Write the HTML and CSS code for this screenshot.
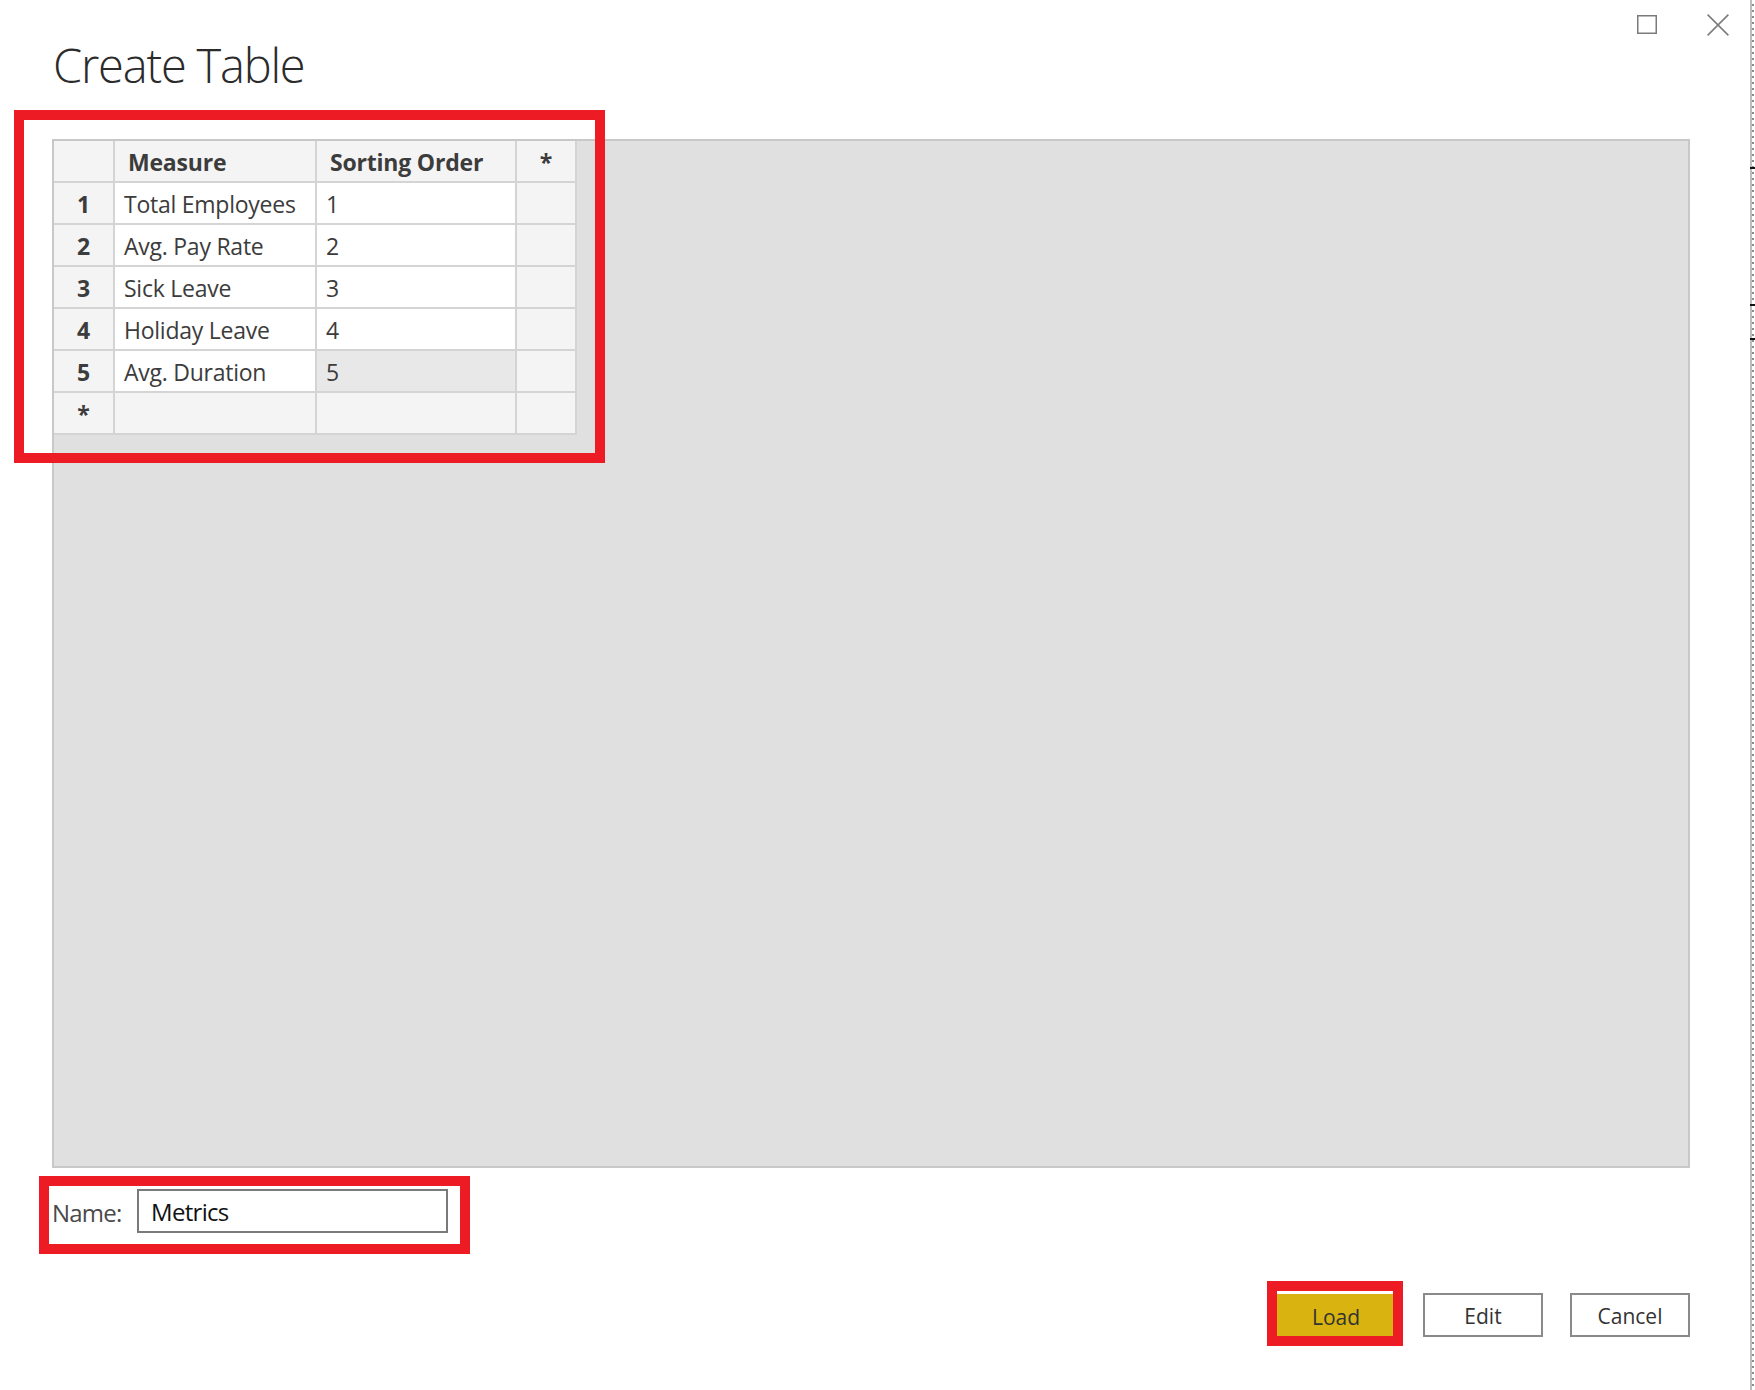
FILE: index.html
```html
<!DOCTYPE html>
<html lang="en">
<head>
<meta charset="utf-8">
<title>Create Table</title>
<link rel="stylesheet" href="styles.css">
</head>
<body>
<div class="screen">
  <div class="window">
    <header class="titlebar">
      <h1 class="title">Create Table</h1>
      <div class="controls">
        <svg class="ctl" width="22" height="22" viewBox="0 0 22 22" aria-label="Maximize"><rect x="1.75" y="1.75" width="18.5" height="17.5" fill="none" stroke="#7b7b7b" stroke-width="1.5"/></svg>
        <svg class="ctl" width="22" height="22" viewBox="0 0 22 22" aria-label="Close"><path d="M0.6 0.6L21.4 21.4M21.4 0.6L0.6 21.4" fill="none" stroke="#7b7b7b" stroke-width="1.5"/></svg>
      </div>
    </header>

    <section class="panel">
      <div class="grid-wrap">
        <div class="grid">
          <div class="cell head corner"></div>
          <div class="cell head colhead">Measure</div>
          <div class="cell head colhead">Sorting Order</div>
          <div class="cell head star">*</div>

          <div class="cell rowhead">1</div>
          <div class="cell data">Total Employees</div>
          <div class="cell data">1</div>
          <div class="cell blank"></div>

          <div class="cell rowhead">2</div>
          <div class="cell data">Avg. Pay Rate</div>
          <div class="cell data">2</div>
          <div class="cell blank"></div>

          <div class="cell rowhead">3</div>
          <div class="cell data">Sick Leave</div>
          <div class="cell data">3</div>
          <div class="cell blank"></div>

          <div class="cell rowhead">4</div>
          <div class="cell data">Holiday Leave</div>
          <div class="cell data">4</div>
          <div class="cell blank"></div>

          <div class="cell rowhead">5</div>
          <div class="cell data">Avg. Duration</div>
          <div class="cell data selected">5</div>
          <div class="cell blank"></div>

          <div class="cell rowhead">*</div>
          <div class="cell blank"></div>
          <div class="cell blank"></div>
          <div class="cell blank"></div>
        </div>
        <div class="mark mark-table"></div>
      </div>
    </section>

    <div class="name-row">
      <label class="name-label" for="tname">Name:</label>
      <div class="name-input" id="tname">Metrics</div>
      <div class="mark mark-name"></div>
    </div>

    <div class="actions">
      <div class="btn-wrap">
        <button class="btn primary">Load</button>
        <div class="mark mark-load"></div>
      </div>
      <button class="btn">Edit</button>
      <button class="btn">Cancel</button>
    </div>
  </div>
  <div class="ruler">
    <span class="tick tick-a"></span>
    <span class="tick tick-b"></span>
    <span class="tick tick-c"></span>
  </div>
</div>
</body>
</html>
```

FILE: styles.css
```css
* { box-sizing: border-box; }

html, body {
  margin: 0;
  padding: 0;
  background: #ffffff;
}

body {
  font-family: "Open Sans", "Noto Sans", "Liberation Sans", sans-serif;
  color: #3c3c3c;
}

.screen {
  display: flex;
  width: 1755px;
  height: 1390px;
  overflow: hidden;
}

.window {
  flex: 0 0 1750px;
  position: relative;
  padding-left: 52px;
}

/* ---------- title bar ---------- */
.titlebar {
  height: 139px;
  display: flex;
  justify-content: space-between;
  align-items: flex-start;
  padding-right: 21px;
}

.title {
  margin: 33px 0 0 1px;
  font-family: "Open Sans", "Noto Sans", sans-serif;
  font-weight: 300;
  font-size: 47px;
  line-height: 64px;
  color: #2b2b2b;
  letter-spacing: -1.2px;
}

.controls {
  display: flex;
  gap: 49px;
  margin-top: 14px;
}

.ctl { display: block; }

/* ---------- grey panel ---------- */
.panel {
  width: 1638px;
  height: 1029px;
  border: 2px solid #c8c8c8;
  background: #e0e0e0;
}

.grid-wrap {
  position: relative;
  width: 523px;
}

.grid {
  display: grid;
  grid-template-columns: 61px 202px 200px 60px;
  grid-auto-rows: 42px;
}

.cell {
  border-right: 2px solid #d4d4d4;
  border-bottom: 2px solid #d4d4d4;
  font-size: 23px;
  line-height: 38px;
  padding-top: 2px;
  white-space: nowrap;
  overflow: hidden;
  color: #3c3c3c;
  letter-spacing: -0.25px;
}

.head, .rowhead, .blank { background: #f4f4f4; }

.colhead {
  font-weight: 700;
  padding-left: 13px;
  letter-spacing: -0.2px;
}

.star {
  font-weight: 700;
  text-align: center;
}

.rowhead {
  font-weight: 700;
  text-align: center;
}

.data {
  background: #ffffff;
  padding-left: 9px;
}

.data.selected { background: #e8e8e8; }

/* ---------- annotation marks ---------- */
.mark {
  position: absolute;
  border: 10px solid #ed1c24;
  pointer-events: none;
}

.mark-table {
  left: -40px;
  top: -31px;
  right: -28px;
  bottom: -28px;
}

/* ---------- name row ---------- */
.name-row {
  position: relative;
  display: flex;
  align-items: center;
  width: 396px;
  height: 44px;
  margin-top: 21px;
}

.name-label {
  font-size: 24px;
  color: #4a4a4a;
  width: 85px;
  letter-spacing: -0.8px;
  padding-top: 2px;
}

.name-input {
  width: 311px;
  height: 44px;
  border: 2px solid #7a7a7a;
  background: #ffffff;
  font-size: 24px;
  line-height: 42px;
  padding-left: 12px;
  color: #111111;
  letter-spacing: -0.7px;
}

.mark-name {
  left: -13px;
  top: -13px;
  right: -22px;
  bottom: -21px;
}

/* ---------- buttons ---------- */
.actions {
  display: flex;
  justify-content: flex-end;
  width: 1638px;
  margin-top: 60px;
}

.btn-wrap {
  position: relative;
  margin-right: 30px;
}

.btn {
  width: 120px;
  height: 44px;
  border: 2px solid #8a8a8a;
  background: #ffffff;
  font-family: "Open Sans", "Noto Sans", sans-serif;
  font-size: 21px;
  color: #333333;
  padding: 2px 0 0 0;
  display: block;
}

.actions > .btn + .btn { margin-left: 27px; }

.btn.primary {
  background: #d9b30f;
  border: 0;
  border-top: 1px solid #ffffff;
  padding-left: 6px;
}

.mark-load {
  left: -6px;
  top: -12px;
  right: -10px;
  bottom: -9px;
}

/* ---------- right-edge ruler ---------- */
.ruler {
  position: relative;
  flex: 0 0 5px;
  border-left: 2px solid #bdbdbd;
  background:
    repeating-linear-gradient(to bottom, #ffffff 0, #ffffff 4px, #8c8c8c 4px, #8c8c8c 6px);
  background-size: 2px 100%;
  background-repeat: no-repeat;
  background-position: 0 0;
}

.tick {
  position: absolute;
  left: -2px;
  width: 5px;
  height: 2px;
  background: #111111;
}

.tick-a { top: 167px; }
.tick-b { top: 304px; }
.tick-c { top: 338px; }
```
